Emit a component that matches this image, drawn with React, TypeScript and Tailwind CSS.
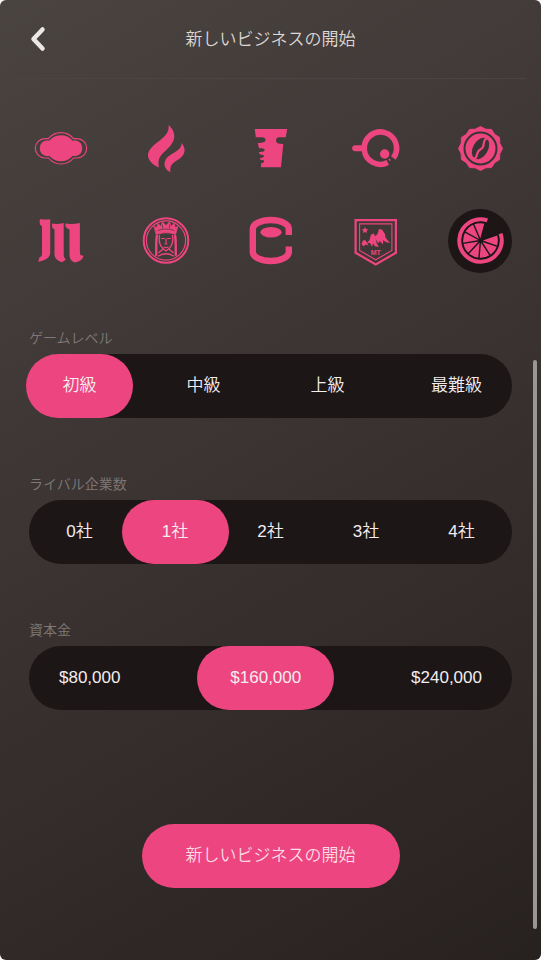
import { ReactNode, useState } from 'react';

interface Logo {
  name: string;
  art: ReactNode;
}

interface SegmentedProps {
  name: string;
  title: string;
  options: string[];
  value: string;
  onChange: (value: string) => void;
}

const polar = (cx: number, cy: number, r: number, deg: number) => {
  const a = (deg * Math.PI) / 180;
  return `${(cx + r * Math.cos(a)).toFixed(2)} ${(cy + r * Math.sin(a)).toFixed(2)}`;
};

const sealPoints = Array.from({ length: 24 }, (_, i) => polar(32.5, 31.5, i % 2 ? 20 : 22, i * 15 + 30)).join(' ');

const slices = Array.from({ length: 8 }, (_, i) => {
  const start = -19 + i * 38;
  return `M32.5 31.5L${polar(32.5, 31.5, 18, start)}A18 18 0 0 1 ${polar(32.5, 31.5, 18, start + 38)}Z`;
}).join('');

const logos: Logo[] = [
  {
    name: 'プレート',
    art: (
      <>
        <path
          fill="currentColor"
          d="M20.5 23.5a15.2 15.2 0 0 1 23 0H47a8 8 0 0 1 0 15.6h-3.5a15.2 15.2 0 0 1-23 0H17a8 8 0 0 1 0-15.6Z"
        />
        <path
          stroke="currentColor"
          strokeWidth="1.2"
          d="M19.5 21.6a16 16 0 0 1 25 0H48a9.6 9.6 0 0 1 0 19.4h-3.5a16 16 0 0 1-25 0H16a9.6 9.6 0 0 1 0-19.4Z"
        />
      </>
    )
  },
  {
    name: '炎',
    art: (
      <g fill="currentColor">
        <path d="M34.6 8c6.4 5.5 8 13.5 2 20.5C30.5 36 22.5 38.500 25 50.5 18 47.5 13.5 42.5 14 37.5c1-7 8.5-11 13.5-15.5C32.5 17.8 35.2 14 34.6 8Z" />
        <path d="M47.6 26c4.4 5.5 3.9 10.8-1.100 15-5.5 4.3-11.5 5.5-10 14.3-6-3-7.5-8.3-4.5-13.3C36 36 47.8 34.5 47.6 26Z" />
      </g>
    )
  },
  {
    name: 'カップ',
    art: (
      <path
        fill="currentColor"
        d="M15.8 12h32.4l-1.4 8.3h-7.5c-3 .7-3 5.5 0 6.2l5 .5-2.300 23.3H21.8l.5-4.3c2.2 0 2.8-.8 2.8-1.700s-.8-1.4-3.8-1.5l-.4-1.9c3.2 0 4-.8 4-1.900s-.8-1.5-3.9-1.6l-1.4-2.3c4.6 0 6-.8 6-2s-1-1.700-5.6-1.8l-1.3-5.3c6-.2 7.8-1.200 7.8-3s-1.3-2.6-3.5-2.700h-6.2Z"
      />
    )
  },
  {
    name: 'フィルター',
    art: (
      <>
        <path stroke="currentColor" strokeWidth="5.6" d="M44.8 45.600A16.2 16.2 0 1 1 50.3 41" />
        <path stroke="currentColor" strokeWidth="6" strokeLinecap="round" d="M12.200 31.300h8" />
        <circle cx="41.7" cy="37" r="4.7" fill="currentColor" />
        <path stroke="currentColor" strokeWidth="1.5" d="m46 42 1.3 1.6" />
      </>
    )
  },
  {
    name: 'コーヒー豆',
    art: (
      <>
        <polygon points={sealPoints} fill="currentColor" stroke="currentColor" strokeLinejoin="round" />
        <circle cx="32.5" cy="31.5" r="16" stroke="#3a3333" strokeWidth="2" />
        <g transform="rotate(30 32.5 31.5)">
          <ellipse cx="32.5" cy="31.5" rx="7.5" ry="11.5" fill="#3a3333" />
          <path stroke="currentColor" strokeWidth="2.2" d="M33 19c-4 5 3.5 8 0 13s2.5 8-1 12.5" />
        </g>
      </>
    )
  },
  {
    name: 'エム',
    art: (
      <g fill="currentColor">
        <path d="M11 10c3.500.9 6.500.6 10.200.2V44c0 4-4 7.500-12 8.800l1.300-4.500c1.800-.7 2.500-1.500 2.500-3.300V17c-2.200-.5-2.800-3-2-7Z" />
        <path d="M23.300 14.500c4 .9 7.500.4 11.400-.5v30.500c0 3 .5 4.500 2.300 6L33 53.300c-4.500-1.300-7.500-3.800-7.500-8.300V20.500c-2.200-.8-2.900-3-2.200-6Z" />
        <path d="M36.500 14.500c5 .9 9.500.4 14.400-.5v28.500c0 3.500.8 4.500 3.600 4-.5 3.800-3.500 6-8.500 7-4-1.300-5.500-4-5.500-8V20.500c-2.800-.8-4.700-3-4-6Z" />
      </g>
    )
  },
  {
    name: '女王',
    art: (
      <g stroke="currentColor" strokeLinecap="round" strokeLinejoin="round">
        <circle cx="32" cy="31.5" r="22.3" strokeWidth="2" />
        <circle cx="32" cy="31.5" r="19.6" strokeWidth="1.2" />
        <path
          fill="currentColor"
          strokeWidth=".8"
          d="m20 17 2.500 2 1.500-4.500 3 3 1.500-4.500 3.500 3.500 3.500-3.500 1.500 4.500 3-3 1.500 4.500 2.500-2-2.500 8.500c-6-2.300-13-2.300-19 0Z"
        />
        <path stroke="#403938" strokeWidth=".7" d="M24 21.500c5-2 11-2 16 0M28.500 16v3M35.500 16v3" />
        <path strokeWidth="2.400" d="M22.800 27c-1 6-.3 13-.6 19M41.200 27c1 6 .3 13 .6 19" />
        <path
          strokeWidth="1.400"
          d="M25.500 26.500c-1 6 .5 12 6.500 15.500 6-3.500 7.500-9.500 6.500-15.500M25 43.500l3.500-3M39 43.500l-3.500-3M24.500 47c5-3 10-3 15 0"
        />
        <path strokeWidth="1.200" d="M27.500 29.500h3M33.500 29.500h3M32 30v4.500M31 35h2M30 38c1 .7 3 .7 4 0" />
      </g>
    )
  },
  {
    name: '円筒',
    art: (
      <>
        <path stroke="currentColor" strokeWidth="6.4" d="M49.8 26V20a18 9 0 0 0-36 0v23a18 9 0 0 0 36 0v-5.500" />
        <ellipse cx="32" cy="23.3" rx="10.6" ry="5.2" fill="currentColor" />
      </>
    )
  },
  {
    name: '山',
    art: (
      <>
        <path stroke="currentColor" strokeWidth="2.2" d="M12.6 11.200h40.300v32.600L32.700 55.500 12.600 43.800Z" />
        <path stroke="currentColor" strokeWidth="1.100" d="M16.600 14.900h32.300v26.600L32.700 50.800 16.600 41.500Z" />
        <g fill="currentColor">
          <path d="m22 18 1 2 2.200.4-1.600 1.500.4 2.200-2-1-2 1 .4-2.200-1.600-1.500 2.200-.4Z" />
          <path d="m18.500 35 1.500-3.500 2.200-.5 3.500 5.500-3.200-1-1.800 2Z" />
          <path d="m24 34 2.500-3 1.500-5.500 3-1 1.700 4.500.8 5 2.500 4-4-.8-2-2.700-1 3.200-2-3.700Z" />
          <path d="m31.500 27.500 3-2.500 1.500-5 3 .5 3 4.500.5 3.500 4.500 5.500-4.500-1-2.200-2-.3 4.500-3.300-3.500-1.700 2.500Z" />
        </g>
        <text x="32.700" y="45.500" textAnchor="middle" fill="currentColor" className="text-[7px] font-bold">
          MT
        </text>
      </>
    )
  },
  {
    name: 'シトラス',
    art: (
      <>
        <path
          stroke="currentColor"
          strokeWidth="4"
          d={`M${polar(32.5, 31.5, 21.2, -19)}A21.2 21.2 0 1 1 ${polar(32.5, 31.5, 21.2, -71)}`}
        />
        <path fill="currentColor" stroke="#1c1617" strokeWidth="1.4" strokeLinejoin="round" d={slices} />
      </>
    )
  }
];

function Segmented({ name, title, options, value, onChange }: SegmentedProps) {
  return (
    <fieldset>
      <legend className="mb-1.5 text-sm leading-5 text-[#7f7977]">{title}</legend>
      <div className="flex h-16 justify-between rounded-full bg-[#1c1617] px-[3px]">
        {options.map(option => (
          <label
            key={option}
            className="relative -mx-1.5 flex min-w-[107px] cursor-pointer items-center justify-center rounded-full px-[33px] has-checked:bg-[#ec457f]">
            <input
              type="radio"
              name={name}
              value={option}
              checked={value === option}
              onChange={() => onChange(option)}
              className="sr-only"
            />
            <span className="whitespace-nowrap">{option}</span>
          </label>
        ))}
      </div>
    </fieldset>
  );
}

export default function App() {
  const [logo, setLogo] = useState('シトラス');
  const [level, setLevel] = useState('初級');
  const [rivals, setRivals] = useState('1社');
  const [capital, setCapital] = useState('$160,000');

  return (
    <div className="bg-white">
      <div className="relative min-h-screen overflow-hidden rounded-md bg-linear-150 from-[#4a4441] via-[#393231] to-[#27211f] font-['Liberation_Sans','Noto_Sans_CJK_JP',sans-serif] text-[17px] font-[350] text-[#f3edee]">
        <header className="mx-[15px] grid h-[79px] grid-cols-[46px_1fr_46px] items-center border-b border-[#4b4443]">
          <button type="button" aria-label="戻る" className="flex h-12 items-center justify-center">
            <svg width="20" height="28" viewBox="0 0 20 28" fill="none" className="text-[#ece6e6]">
              <path
                d="M14.5 4.5 5.5 14l9 9.5"
                stroke="currentColor"
                strokeWidth="4.500"
                strokeLinecap="round"
                strokeLinejoin="round"
              />
            </svg>
          </button>
          <h1 className="pt-0.5 text-center text-[#ddd7d5]">新しいビジネスの開始</h1>
        </header>

        <form className="px-[29px] pt-[38px] pb-[72px]" onSubmit={e => e.preventDefault()}>
          <div role="radiogroup" aria-label="ロゴ" className="grid grid-cols-[repeat(5,64px)] justify-between gap-y-7">
            {logos.map(item => (
              <label
                key={item.name}
                className="relative size-16 cursor-pointer rounded-full text-[#ec457f] has-checked:bg-[#1c1617]">
                <input
                  type="radio"
                  name="logo"
                  aria-label={item.name}
                  checked={logo === item.name}
                  onChange={() => setLogo(item.name)}
                  className="sr-only"
                />
                <svg viewBox="0 0 64 64" fill="none" className="size-16">
                  {item.art}
                </svg>
              </label>
            ))}
          </div>

          <div className="mt-[55px] flex flex-col gap-14">
            <Segmented
              name="level"
              title="ゲームレベル"
              options={['初級', '中級', '上級', '最難級']}
              value={level}
              onChange={setLevel}
            />
            <Segmented
              name="rivals"
              title="ライバル企業数"
              options={['0社', '1社', '2社', '3社', '4社']}
              value={rivals}
              onChange={setRivals}
            />
            <Segmented
              name="capital"
              title="資本金"
              options={['$80,000', '$160,000', '$240,000']}
              value={capital}
              onChange={setCapital}
            />
          </div>

          <button
            type="submit"
            className="mx-auto mt-[114px] block h-16 cursor-pointer rounded-full bg-[#ec457f] px-11 text-[#fbdbe6]">
            新しいビジネスの開始
          </button>
        </form>

        <div className="absolute top-[360px] right-1 bottom-[31px] w-1 rounded-full bg-[#9b9696]" />
      </div>
    </div>
  );
}
